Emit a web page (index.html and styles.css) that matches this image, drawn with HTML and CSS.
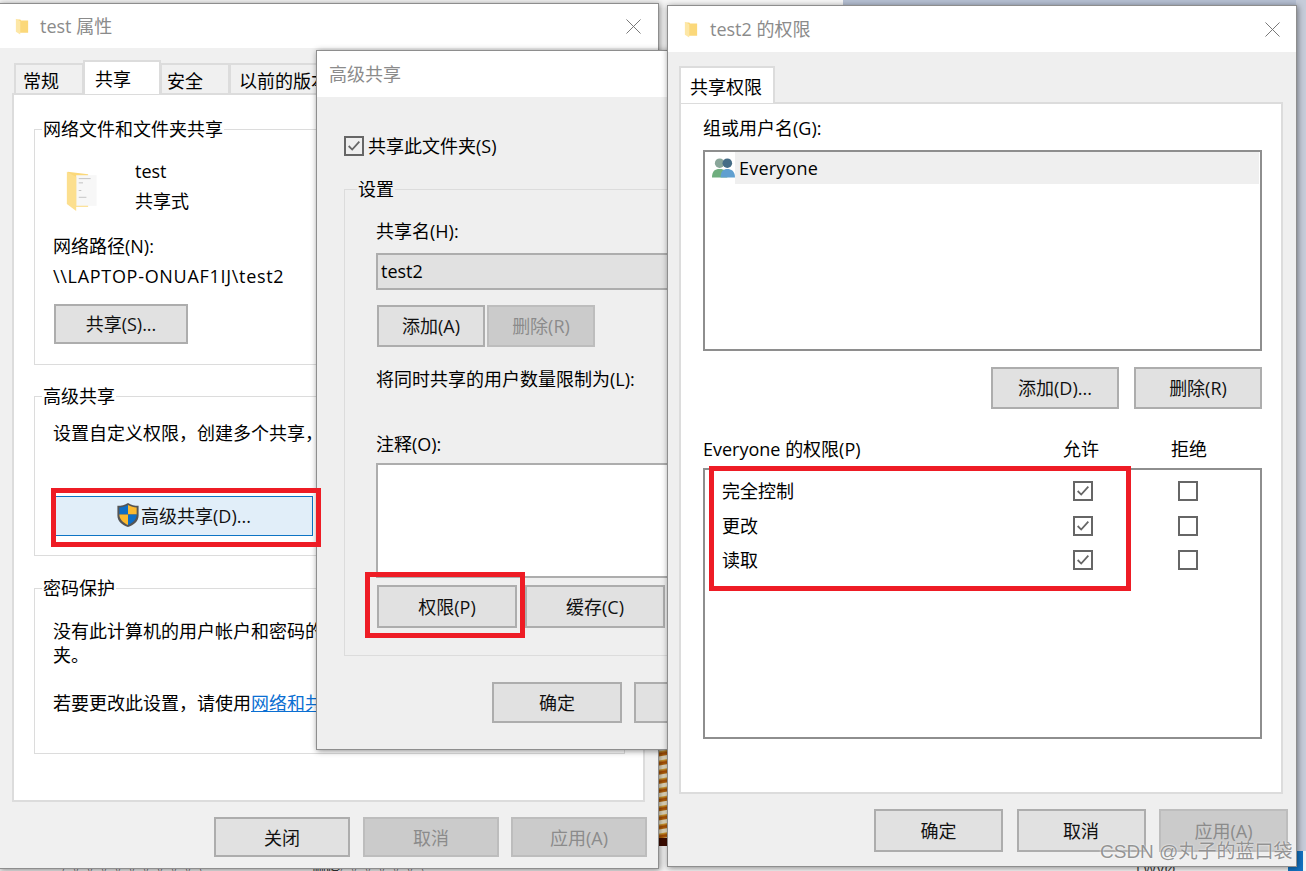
FILE: index.html
```html
<!DOCTYPE html>
<html lang="zh-CN">
<head>
<meta charset="utf-8">
<title>test 属性</title>
<link rel="stylesheet" href="styles.css">
</head>
<body>
<div class="desktop">
  <div class="bg-top"></div>
  <div class="bg-right"></div>
  <div class="bg-stripes"></div>
  <div class="bg-corner"></div>
  <div class="bg-text bg-text-a">· · · ○○○○○○○○○○</div>
  <div class="bg-text bg-text-b">· · · 删除○○○○○○</div>
  <div class="bg-text bg-text-c">LWVØ</div>

  <section class="win win-props">
    <header class="titlebar">
      <svg class="folder" viewBox="0 0 16 20"><path d="M1 2h5l1 1h8v14H6l-1 0z" fill="#fbd87a"/><path d="M1 1l5 3v15l-5-3z" fill="#fde7a6"/></svg>
      <span class="title">test 属性</span>
      <svg class="close" viewBox="0 0 16 16"><path d="M0.5 .5l15 15M15.5 .5l-15 15" stroke="#707070" stroke-width="1" fill="none"/></svg>
    </header>
    <div class="body props-body">
      <nav class="tabs">
        <span class="tab">常规</span>
        <span class="tab active">共享</span>
        <span class="tab tab-third">安全</span>
        <span class="tab tab-wide">以前的版本</span>
      </nav>
      <div class="panel props-panel">
        <div class="group g-share">
          <span class="legend">网络文件和文件夹共享</span>
          <div class="share-head">
            <svg class="big-folder" viewBox="0 0 40 48"><path d="M2 2l24 3v38H8z" fill="#fbd87a"/><path d="M12 6h24v36H12z" fill="#f7f7f7"/><path d="M15 10h14M15 15h5M15 24h3M15 32h9" stroke="#bbb" stroke-width="1"/><path d="M1 2l11 6v40L1 40z" fill="#fcdf8e"/></svg>
            <div class="share-names"><div>test</div><div>共享式</div></div>
          </div>
          <p class="line lbl-path">网络路径(N):</p>
          <p class="line path">\\LAPTOP-ONUAF1IJ\test2</p>
          <span class="btn btn-share">共享(S)...</span>
        </div>
        <div class="group g-adv">
          <span class="legend">高级共享</span>
          <p class="line adv-text">设置自定义权限，创建多个共享，并设置其他高级共享选项。</p>
          <span class="btn btn-adv">
            <svg class="shield" viewBox="0 0 24 27"><path d="M12 1c3 2 7 3 11 3v10c0 6-5 10-11 12C6 24 1 20 1 14V4c4 0 8-1 11-3z" fill="#555"/><path d="M12 3c-3 1.500-6 2.500-9 2.700V13h9z" fill="#0f6ec6"/><path d="M12 3c3 1.500 6 2.500 9 2.700V13h-9z" fill="#fbb92f"/><path d="M3 13c0 5 4 8.500 9 11V13z" fill="#fbb92f"/><path d="M21 13c0 5-4 8.500-9 11V13z" fill="#0f6ec6"/></svg>高级共享(D)...</span>
        </div>
        <div class="group g-pass">
          <span class="legend">密码保护</span>
          <p class="line">没有此计算机的用户帐户和密码的用户可以访问与所有人共享的文件夹。</p>
          <p class="line">夹。</p>
          <p class="line pass-c">若要更改此设置，请使用<a class="link">网络和共享中心</a>。</p>
        </div>
      </div>
      <footer class="foot props-foot">
        <span class="btn">关闭</span>
        <span class="btn off">取消</span>
        <span class="btn off">应用(A)</span>
      </footer>
    </div>
  </section>

  <section class="win win-adv">
    <header class="titlebar adv-title"><span class="title">高级共享</span></header>
    <div class="body adv-body">
      <label class="check-row"><span class="check on"><svg viewBox="0 0 18 18"><path d="M3 9l4 4 8-9" stroke="#666" stroke-width="2" fill="none"/></svg></span>共享此文件夹(S)</label>
      <div class="group g-settings">
        <span class="legend legend-grey">设置</span>
        <p class="line name-lbl">共享名(H):</p>
        <div class="field">test2</div>
        <div class="row-btns">
          <span class="btn btn-s">添加(A)</span>
          <span class="btn btn-s off">删除(R)</span>
        </div>
        <p class="line limit-lbl">将同时共享的用户数量限制为(L):</p>
        <p class="line note-lbl">注释(O):</p>
        <div class="textarea"></div>
        <div class="row-btns2">
          <span class="btn btn-m">权限(P)</span>
          <span class="btn btn-m">缓存(C)</span>
        </div>
      </div>
      <footer class="adv-foot">
        <span class="btn btn-f">确定</span>
        <span class="btn btn-f">取消</span>
      </footer>
    </div>
  </section>

  <section class="win win-perm">
    <header class="titlebar perm-title">
      <svg class="folder" viewBox="0 0 16 20"><path d="M1 2h5l1 1h8v14H6l-1 0z" fill="#fbd87a"/><path d="M1 1l5 3v15l-5-3z" fill="#fde7a6"/></svg>
      <span class="title">test2 的权限</span>
      <svg class="close" viewBox="0 0 16 16"><path d="M0.5 .5l15 15M15.5 .5l-15 15" stroke="#707070" stroke-width="1" fill="none"/></svg>
    </header>
    <div class="body perm-body">
      <nav class="tabs perm-tabs"><span class="tab active perm-tab">共享权限</span></nav>
      <div class="panel perm-panel">
        <p class="line users-lbl">组或用户名(G):</p>
        <div class="users">
          <div class="user">
            <svg class="users-icon" viewBox="0 0 24 22"><circle cx="8" cy="6" r="5" fill="#8aa69a"/><path d="M0 21c0-7 3-9 8-9s8 2 8 9z" fill="#6fae7e"/><circle cx="16" cy="6" r="5" fill="#456c86"/><path d="M9 21c0-7 3-9 7-9s8 2 8 9z" fill="#5f9fd0"/></svg>
            <span class="user-name">Everyone</span>
          </div>
        </div>
        <div class="user-btns">
          <span class="btn btn-u">添加(D)...</span>
          <span class="btn btn-u">删除(R)</span>
        </div>
        <div class="perm-head">
          <span class="perm-for">Everyone 的权限(P)</span>
          <span class="col-allow">允许</span>
          <span class="col-deny">拒绝</span>
        </div>
        <div class="perm-table">
          <div class="perm-row">
            <span class="perm-name">完全控制</span>
            <span class="check on small"><svg viewBox="0 0 18 18"><path d="M3 9l4 4 8-9" stroke="#666" stroke-width="2" fill="none"/></svg></span>
            <span class="check small deny"></span>
          </div>
          <div class="perm-row">
            <span class="perm-name">更改</span>
            <span class="check on small"><svg viewBox="0 0 18 18"><path d="M3 9l4 4 8-9" stroke="#666" stroke-width="2" fill="none"/></svg></span>
            <span class="check small deny"></span>
          </div>
          <div class="perm-row">
            <span class="perm-name">读取</span>
            <span class="check on small"><svg viewBox="0 0 18 18"><path d="M3 9l4 4 8-9" stroke="#666" stroke-width="2" fill="none"/></svg></span>
            <span class="check small deny"></span>
          </div>
        </div>
      </div>
      <footer class="foot perm-foot">
        <span class="btn btn-p">确定</span>
        <span class="btn btn-p">取消</span>
        <span class="btn btn-p off">应用(A)</span>
      </footer>
    </div>
  </section>

  <div class="mark mark-a"></div>
  <div class="mark mark-b"></div>
  <div class="mark mark-c"></div>
  <div class="watermark">CSDN @丸子的蓝口袋</div>
</div>
</body>
</html>
```
FILE: styles.css
```css
* { box-sizing: border-box; }
html, body { margin: 0; padding: 0; }
body { width: 1306px; height: 871px; overflow: hidden; background: #fff; font-family: "Open Sans", "Noto Sans CJK SC", sans-serif; color: #000; font-size: 18px; }
.desktop { position: relative; width: 1306px; height: 871px; overflow: hidden; background: #f4f4f4; }
p { margin: 0; }

.bg-top { position: absolute; left: 659px; top: 0; width: 647px; height: 8px; background: linear-gradient(90deg, #f6f6f6 0, #f6f6f6 184px, #b5bfd2 184px); }
.bg-right { position: absolute; left: 1296px; top: 0; width: 10px; height: 851px; background: #c6ccd9; }
.bg-stripes { position: absolute; left: 658px; top: 748px; width: 10px; height: 98px; background: linear-gradient(180deg, transparent 92%, #3e0d02 92%), repeating-linear-gradient(170deg, #e6dcc0 0, #e6dcc0 3px, #d19a2e 4px, #a84d06 6px, #b5660f 8px, #e6dcc0 9px); }
.bg-corner { position: absolute; left: 1288px; top: 851px; width: 15px; height: 20px; background: #1173c4; }
.bg-text { position: absolute; font-size: 14px; line-height: 14px; color: #333; white-space: nowrap; }
.bg-text-a { left: 40px; top: 865px; }
.bg-text-b { left: 290px; top: 865px; }
.bg-text-c { left: 1136px; top: 862px; }

.win { position: absolute; background: #f0f0f0; border: 1px solid #8e8e8e; box-shadow: 1px 1px 6px rgba(0,0,0,.45); display: flex; flex-direction: column; overflow: hidden; }
.titlebar { display: flex; align-items: center; background: #fff; flex: none; }
.title { color: #8b8b8b; font-size: 18px; line-height: 24px; white-space: nowrap; }
.folder { width: 14px; height: 19px; flex: none; }
.close { width: 15px; height: 15px; margin-left: auto; flex: none; }
.body { flex: 1; }

.btn { display: flex; align-items: center; justify-content: center; height: 40px; padding-bottom: 2px; background: #e1e1e1; border: 2px solid #adadad; font-size: 18px; color: #111; white-space: nowrap; flex: none; }
.btn.off { background: #cbcbcb; border-color: #bdbdbd; color: #8b8b8b; }
.line { font-size: 18px; line-height: 24px; white-space: nowrap; }
.group { border: 1px solid #dcdcdc; position: relative; }
.legend { position: absolute; top: -13px; left: 7px; padding: 0 1px; background: #fff; font-size: 18px; line-height: 24px; white-space: nowrap; }
.legend-grey { background: #efefef; left: 12px; }

/* properties */
.win-props { left: -1px; top: 3px; width: 660px; height: 866px; }
.win-props .titlebar { height: 44px; padding: 0 17px 0 15px; }
.win-props .title { margin-left: 11px; }
.tabs { display: flex; align-items: flex-end; height: 45px; padding-left: 2px; }
.props-body { padding-left: 13px; }
.tab { height: 30px; width: 70px; margin-left: -1px; padding: 2px 0 0 7px; background: #f0f0f0; border: 2px solid #dcdcdc; border-bottom: 0; display: flex; align-items: center; font-size: 18px; }
.tab.active { height: 34px; width: 78px; padding: 0 0 0 10px; background: #fff; position: relative; z-index: 1; margin-bottom: -1px; }
.tab-third { padding-left: 5px; }
.tab-wide { width: 110px; padding-left: 8px; white-space: nowrap; }
.panel { background: #fff; border: 2px solid #dcdcdc; }
.props-panel { width: 633px; height: 709px; padding: 34px 19px 0 20px; margin-left: -1px; }
.props-panel .group { width: 591px; }
.g-share { height: 236px; padding: 26px 0 0 18px; }
.share-head { display: flex; }
.big-folder { width: 34px; height: 41px; margin: 14px 0 0 13px; flex: none; }
.share-names { margin-left: 35px; font-size: 18px; line-height: 30px; }
.lbl-path { margin-top: 18px; }
.path { margin-top: 6px; letter-spacing: .7px; }
.btn-share { width: 134px; margin: 16px 0 0 1px; }
.g-adv { height: 160px; margin-top: 31px; padding: 24px 0 0 18px; }
.adv-text { overflow: hidden; }
.btn-adv { position: absolute; left: 19px; top: 99px; width: 259px; height: 40px; background: #e1eef9; border: 1px solid #0d74c5; gap: 1px; }
.shield { width: 24px; height: 26px; flex: none; }
.g-pass { height: 166px; margin-top: 32px; padding: 30px 0 0 18px; }
.pass-c { margin-top: 24px; }
.link { color: #0b6fd2; text-decoration: underline; }
.foot { display: flex; }
.props-foot { margin: 15px 0 0 201px; gap: 13px; }
.props-foot .btn { width: 136px; padding-bottom: 0; }
.props-foot .btn:nth-child(3) { margin-left: -1px; }

/* advanced */
.win-adv { left: 316px; top: 50px; width: 360px; height: 700px; }
.adv-title { height: 46px; padding-left: 12px; }
.adv-body { padding: 39px 0 0 27px; background: #efefef; }
.check-row { display: flex; align-items: center; gap: 4px; font-size: 18px; line-height: 20px; }
.check { width: 20px; height: 20px; border: 2px solid #666; background: #fff; display: flex; flex: none; }
.check svg { width: 100%; height: 100%; display: block; }
.adv-body .check.on { background: #efefef; }
.g-settings { margin-top: 33px; width: 340px; height: 467px; padding: 29px 0 0 31px; border-right: 0; }
.field { width: 320px; height: 37px; margin-top: 10px; background: #e1e1e1; border: 2px solid #adadad; font-size: 18px; line-height: 33px; padding-left: 3px; }
.row-btns { display: flex; gap: 2px; margin: 15px 0 0 1px; }
.btn-s { width: 108px; height: 42px; }
.limit-lbl { margin-top: 20px; }
.note-lbl { margin-top: 41px; }
.textarea { width: 320px; height: 115px; margin-top: 7px; background: #fff; border: 2px solid #adadad; }
.row-btns2 { display: flex; gap: 8px; margin: 7px 0 0 1px; }
.btn-m { width: 140px; height: 43px; }
.adv-foot { display: flex; gap: 12px; margin: 26px 0 0 148px; }
.btn-f { width: 130px; height: 41px; }

/* permissions */
.win-perm { left: 667px; top: 5px; width: 630px; height: 862px; background: #efefef; }
.perm-title { height: 46px; padding: 0 16px 0 16px; }
.perm-title .title { margin-left: 12px; }
.perm-body { padding-left: 11px; }
.perm-tabs { height: 50px; padding-left: 0; }
.tab.perm-tab { width: 96px; height: 37px; margin-left: 0; padding-left: 9px; }
.perm-panel { width: 604px; height: 692px; padding: 12px 0 0 22px; }
.users { width: 559px; height: 201px; margin-top: 10px; background: #fff; border: 2px solid #8e8e8e; }
.user { display: flex; align-items: center; height: 32px; padding-left: 7px; }
.users-icon { width: 23px; height: 22px; flex: none; }
.user-name { flex: 1; background: #efefef; height: 100%; font-size: 18px; line-height: 33px; padding-left: 4px; margin-right: 1px; letter-spacing: .2px; }
.user-btns { display: flex; gap: 15px; justify-content: flex-end; width: 559px; margin-top: 16px; }
.btn-u { width: 128px; height: 42px; }
.perm-head { display: flex; height: 24px; margin-top: 28px; width: 559px; font-size: 18px; line-height: 24px; }
.col-allow { margin-left: auto; margin-right: 72px; }
.col-deny { margin-right: 55px; }
.perm-table { width: 559px; height: 271px; margin-top: 7px; background: #fff; border: 2px solid #8e8e8e; padding-top: 4px; }
.perm-row { display: flex; align-items: center; height: 34.500px; padding-left: 17px; font-size: 18px; }
.perm-name { width: 351px; padding-bottom: 2px; }
.small { width: 20px; height: 20px; }
.deny { margin-left: 85px; }
.perm-foot { gap: 13.500px; margin: 15px 0 0 195px; }
.btn-p { width: 129px; height: 43px; }

.mark { position: absolute; border: 5px solid #ee1c25; }
.mark-a { left: 51px; top: 488px; width: 270px; height: 59px; }
.mark-b { left: 365px; top: 572px; width: 160px; height: 66px; }
.mark-c { left: 709px; top: 466px; width: 422px; height: 125px; }
.watermark { position: absolute; left: 1100px; top: 840px; font-family: "Liberation Sans", "Noto Sans CJK SC", sans-serif; font-size: 19px; line-height: 24px; color: rgba(130,130,130,.85); text-shadow: 0 0 2px #fff; white-space: nowrap; }
```
